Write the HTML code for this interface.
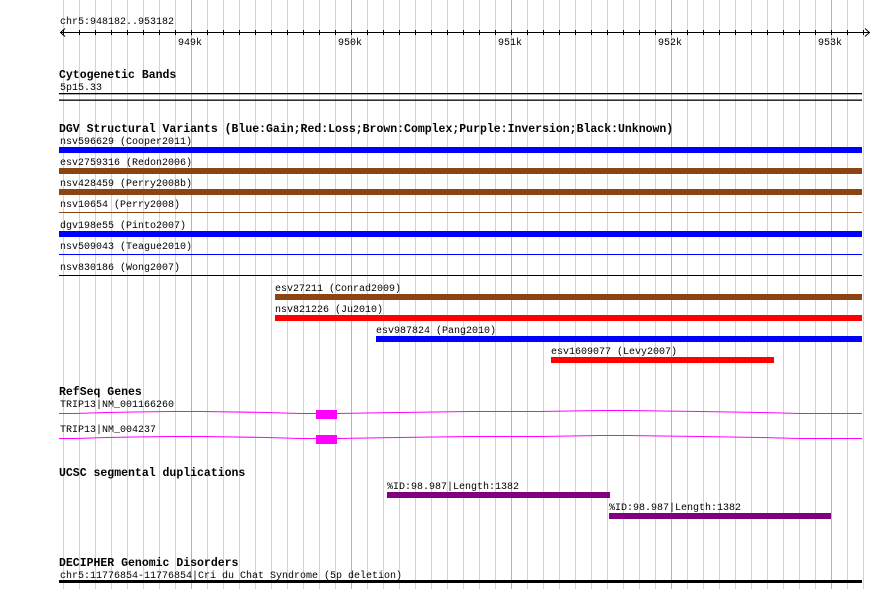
<!DOCTYPE html>
<html><head><meta charset="utf-8"><style>
html,body{margin:0;padding:0;background:#fff;width:890px;height:589px;overflow:hidden}
text{font-family:"Liberation Mono","DejaVu Sans Mono",monospace;font-size:10px;fill:#000}
.b{font-weight:bold;font-size:11.5px}
</style></head><body>
<svg width="890" height="589" xmlns="http://www.w3.org/2000/svg">
<g id="grid" stroke="#b0e0ea" stroke-width="1">
</g>
<script>
</script>
<g stroke="#b0e0ea">
<line x1="63.5" y1="0" x2="63.5" y2="589"/><line x1="79.5" y1="0" x2="79.5" y2="589"/><line x1="95.5" y1="0" x2="95.5" y2="589"/><line x1="111.5" y1="0" x2="111.5" y2="589"/><line x1="127.5" y1="0" x2="127.5" y2="589"/><line x1="143.5" y1="0" x2="143.5" y2="589"/><line x1="159.5" y1="0" x2="159.5" y2="589"/><line x1="175.5" y1="0" x2="175.5" y2="589"/><line x1="207.5" y1="0" x2="207.5" y2="589"/><line x1="223.5" y1="0" x2="223.5" y2="589"/><line x1="239.5" y1="0" x2="239.5" y2="589"/><line x1="255.5" y1="0" x2="255.5" y2="589"/><line x1="271.5" y1="0" x2="271.5" y2="589"/><line x1="287.5" y1="0" x2="287.5" y2="589"/><line x1="303.5" y1="0" x2="303.5" y2="589"/><line x1="319.5" y1="0" x2="319.5" y2="589"/><line x1="335.5" y1="0" x2="335.5" y2="589"/><line x1="367.5" y1="0" x2="367.5" y2="589"/><line x1="383.5" y1="0" x2="383.5" y2="589"/><line x1="399.5" y1="0" x2="399.5" y2="589"/><line x1="415.5" y1="0" x2="415.5" y2="589"/><line x1="431.5" y1="0" x2="431.5" y2="589"/><line x1="447.5" y1="0" x2="447.5" y2="589"/><line x1="463.5" y1="0" x2="463.5" y2="589"/><line x1="479.5" y1="0" x2="479.5" y2="589"/><line x1="495.5" y1="0" x2="495.5" y2="589"/><line x1="527.5" y1="0" x2="527.5" y2="589"/><line x1="543.5" y1="0" x2="543.5" y2="589"/><line x1="559.5" y1="0" x2="559.5" y2="589"/><line x1="575.5" y1="0" x2="575.5" y2="589"/><line x1="591.5" y1="0" x2="591.5" y2="589"/><line x1="607.5" y1="0" x2="607.5" y2="589"/><line x1="623.5" y1="0" x2="623.5" y2="589"/><line x1="639.5" y1="0" x2="639.5" y2="589"/><line x1="655.5" y1="0" x2="655.5" y2="589"/><line x1="687.5" y1="0" x2="687.5" y2="589"/><line x1="703.5" y1="0" x2="703.5" y2="589"/><line x1="719.5" y1="0" x2="719.5" y2="589"/><line x1="735.5" y1="0" x2="735.5" y2="589"/><line x1="751.5" y1="0" x2="751.5" y2="589"/><line x1="767.5" y1="0" x2="767.5" y2="589"/><line x1="783.5" y1="0" x2="783.5" y2="589"/><line x1="799.5" y1="0" x2="799.5" y2="589"/><line x1="815.5" y1="0" x2="815.5" y2="589"/><line x1="847.5" y1="0" x2="847.5" y2="589"/><line x1="863.5" y1="0" x2="863.5" y2="589"/>
</g>
<g stroke="#88c4dc">
<line x1="191.5" y1="0" x2="191.5" y2="589"/><line x1="351.5" y1="0" x2="351.5" y2="589"/><line x1="511.5" y1="0" x2="511.5" y2="589"/><line x1="671.5" y1="0" x2="671.5" y2="589"/><line x1="831.5" y1="0" x2="831.5" y2="589"/>
</g>
<!-- axis -->
<text x="60" y="24">chr5:948182..953182</text>
<g stroke="#000">
<line x1="60" y1="32.5" x2="870" y2="32.5"/>
<polyline points="65,28.5 60.5,32.5 65,36.5" fill="none"/>
<polyline points="865,28.5 869.5,32.5 865,36.5" fill="none"/>
<path d="M63.5 30v5M79.5 30v5M95.5 30v5M111.5 30v5M127.5 30v5M143.5 30v5M159.5 30v5M175.5 30v5M191.5 30v5M207.5 30v5M223.5 30v5M239.5 30v5M255.5 30v5M271.5 30v5M287.5 30v5M303.5 30v5M319.5 30v5M335.5 30v5M351.5 30v5M367.5 30v5M383.5 30v5M399.5 30v5M415.5 30v5M431.5 30v5M447.5 30v5M463.5 30v5M479.5 30v5M495.5 30v5M511.5 30v5M527.5 30v5M543.5 30v5M559.5 30v5M575.5 30v5M591.5 30v5M607.5 30v5M623.5 30v5M639.5 30v5M655.5 30v5M671.5 30v5M687.5 30v5M703.5 30v5M719.5 30v5M735.5 30v5M751.5 30v5M767.5 30v5M783.5 30v5M799.5 30v5M815.5 30v5M831.5 30v5M847.5 30v5M863.5 30v5"/>
</g>
<text x="178" y="45">949k</text><text x="338" y="45">950k</text><text x="498" y="45">951k</text><text x="658" y="45">952k</text><text x="818" y="45">953k</text>

<text class="b" x="59" y="78">Cytogenetic Bands</text>
<text x="60" y="90">5p15.33</text>
<rect x="59" y="93" width="803" height="1.3" fill="#000"/>
<rect x="59" y="99.5" width="803" height="1.3" fill="#000"/>

<text class="b" x="59" y="132">DGV Structural Variants (Blue:Gain;Red:Loss;Brown:Complex;Purple:Inversion;Black:Unknown)</text>
<text x="60" y="144">nsv596629 (Cooper2011)</text>
<rect x="59" y="147" width="803" height="6" fill="#0000ff"/>
<text x="60" y="165">esv2759316 (Redon2006)</text>
<rect x="59" y="168" width="803" height="6" fill="#8b4513"/>
<text x="60" y="186">nsv428459 (Perry2008b)</text>
<rect x="59" y="189" width="803" height="6" fill="#8b4513"/>
<text x="60" y="207">nsv10654 (Perry2008)</text>
<rect x="59" y="212" width="803" height="1" fill="#8b4513"/>
<text x="60" y="228">dgv198e55 (Pinto2007)</text>
<rect x="59" y="231" width="803" height="6" fill="#0000ff"/>
<text x="60" y="249">nsv509043 (Teague2010)</text>
<rect x="59" y="254" width="803" height="1" fill="#0000ff"/>
<text x="60" y="270">nsv830186 (Wong2007)</text>
<rect x="59" y="275" width="803" height="1" fill="#000"/>
<text x="275" y="291">esv27211 (Conrad2009)</text>
<rect x="275" y="294" width="587" height="6" fill="#8b4513"/>
<text x="275" y="312">nsv821226 (Ju2010)</text>
<rect x="275" y="315" width="587" height="6" fill="#ff0000"/>
<text x="376" y="333">esv987824 (Pang2010)</text>
<rect x="376" y="336" width="486" height="6" fill="#0000ff"/>
<text x="551" y="354">esv1609077 (Levy2007)</text>
<rect x="551" y="357" width="223" height="6" fill="#ff0000"/>

<text class="b" x="59" y="395">RefSeq Genes</text>
<text x="60" y="407">TRIP13|NM_001166260</text>
<polyline fill="none" stroke="#ff00ff" points="59,413.5 75,413.5 107,412.5 170,411.5 203,411.5 267,412.5 300,413.5 316,413.5 337,413.5 400,412.5 470,411.5 540,411.5 600,410.5 630,410.5 700,411.5 760,412.5 800,413.5 862,413.5"/>
<rect x="316" y="410" width="21" height="9" fill="#ff00ff"/>
<text x="60" y="432">TRIP13|NM_004237</text>
<polyline fill="none" stroke="#ff00ff" points="59,438.5 75,438.5 107,437.5 170,436.5 203,436.5 267,437.5 300,438.5 316,438.5 337,438.5 400,437.5 470,436.5 540,436.5 600,435.5 630,435.5 700,436.5 760,437.5 800,438.5 862,438.5"/>
<rect x="316" y="435" width="21" height="9" fill="#ff00ff"/>

<text class="b" x="59" y="476">UCSC segmental duplications</text>
<text x="387" y="489">%ID:98.987|Length:1382</text>
<rect x="387" y="492" width="223" height="6" fill="#800080"/>
<text x="609" y="510">%ID:98.987|Length:1382</text>
<rect x="609" y="513" width="222" height="6" fill="#800080"/>

<text class="b" x="59" y="566">DECIPHER Genomic Disorders</text>
<text x="60" y="578">chr5:11776854-11776854|Cri du Chat Syndrome (5p deletion)</text>
<rect x="59" y="580" width="803" height="3" fill="#000"/>
</svg>
</body></html>
